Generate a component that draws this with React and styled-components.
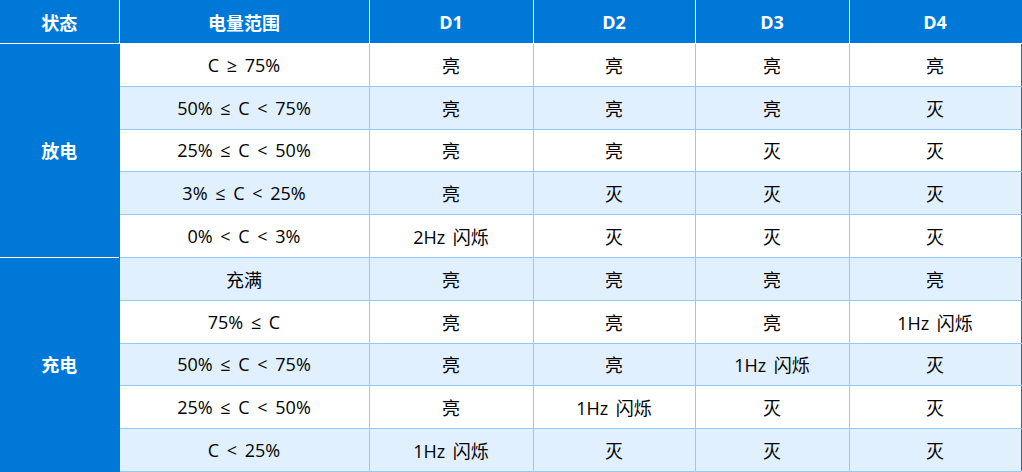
import React from 'react';
import styled, { createGlobalStyle } from 'styled-components';

const GlobalStyle = createGlobalStyle`
   body {
      margin: 0;
      background: #ffffff;
      font-family: "Open Sans", "Noto Sans CJK SC", sans-serif;
   }
`

const Table = styled.table`
   width: 1021px;
   border-collapse: collapse;
   table-layout: fixed;
   font-size: 18px;
   color: #000;
   border-right: 1px solid #0078d7;
   border-bottom: 1px solid #0078d7;
`

const HeadCell = styled.th`
   height: 43px;
   padding: 0;
   background: #0078d7;
   color: #fff;
   font-weight: 700;
   text-align: center;
   border-right: 1px solid #fff;
   border-bottom: 1px solid #fff;
   &:last-child {
      border-right: 1px solid #0078d7;
   }
`

const Row = styled.tr`
   height: 42.8px;
   background: ${props => (props.$alt ? '#e0f0fe' : '#ffffff')};
`

const GroupCell = styled.td`
   padding: 0;
   background: #0078d7;
   color: #fff;
   font-weight: 700;
   text-align: center;
   border-right: 1px solid #0078d7;
   border-top: 1px solid #fff;
`

const Cell = styled.td`
   padding: 0;
   text-align: center;
   word-spacing: 3px;
   border: 1px solid #90cbfb;
   border-top-color: ${props => (props.$groupStart ? '#0078d7' : '#90cbfb')};
   &:last-child {
      border-right: 1px solid #0078d7;
   }
`

const columns = [
   { label: '状态', width: 119 },
   { label: '电量范围', width: 250 },
   { label: 'D1', width: 164 },
   { label: 'D2', width: 162 },
   { label: 'D3', width: 154 },
   { label: 'D4', width: 172 },
]

const groups = [
   {
      name: '放电',
      rows: [
         ['C ≥ 75%', '亮', '亮', '亮', '亮'],
         ['50% ≤ C < 75%', '亮', '亮', '亮', '灭'],
         ['25% ≤ C < 50%', '亮', '亮', '灭', '灭'],
         ['3% ≤ C < 25%', '亮', '灭', '灭', '灭'],
         ['0% < C < 3%', '2Hz 闪烁', '灭', '灭', '灭'],
      ],
   },
   {
      name: '充电',
      rows: [
         ['充满', '亮', '亮', '亮', '亮'],
         ['75% ≤ C', '亮', '亮', '亮', '1Hz 闪烁'],
         ['50% ≤ C < 75%', '亮', '亮', '1Hz 闪烁', '灭'],
         ['25% ≤ C < 50%', '亮', '1Hz 闪烁', '灭', '灭'],
         ['C < 25%', '1Hz 闪烁', '灭', '灭', '灭'],
      ],
   },
]

const App = () => {
   let index = 0
   return (
      <>
         <GlobalStyle />
         <Table>
            <colgroup>
               {columns.map(c => (
                  <col key={c.label} style={{ width: c.width }} />
               ))}
            </colgroup>
            <thead>
               <tr>
                  {columns.map(c => (
                     <HeadCell key={c.label}>{c.label}</HeadCell>
                  ))}
               </tr>
            </thead>
            <tbody>
               {groups.map((g, gi) =>
                  g.rows.map((r, ri) => {
                     index += 1
                     const groupStart = gi > 0 && ri === 0
                     return (
                        <Row key={`${gi}-${ri}`} $alt={index % 2 === 0}>
                           {ri === 0 && (
                              <GroupCell rowSpan={g.rows.length}>{g.name}</GroupCell>
                           )}
                           {r.map((v, ci) => (
                              <Cell key={ci} $groupStart={groupStart}>
                                 {v}
                              </Cell>
                           ))}
                        </Row>
                     )
                  })
               )}
            </tbody>
         </Table>
      </>
   )
}

export default App
